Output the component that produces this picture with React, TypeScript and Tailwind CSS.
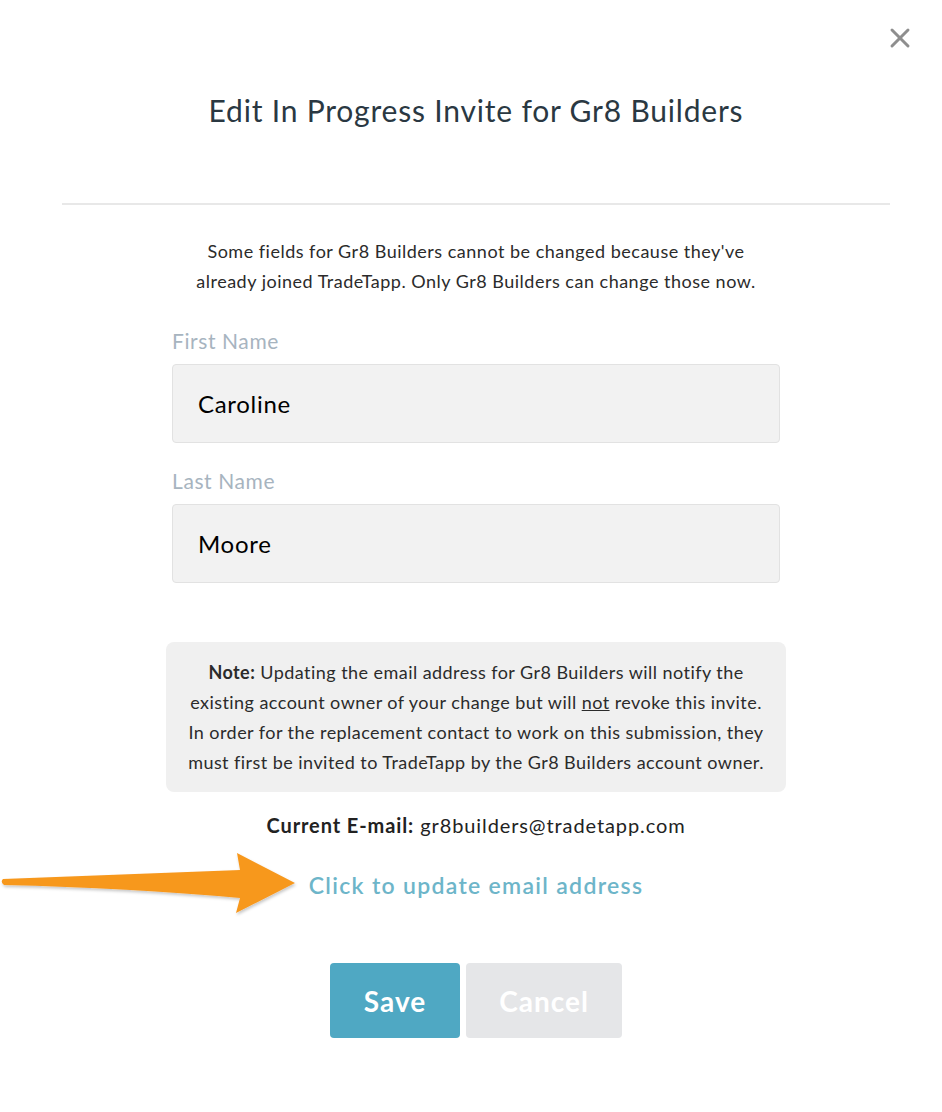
import { X } from 'lucide-react';

function Field({ label, value }: { label: string; value: string }) {
  return (
    <div className="flex flex-col">
      <label className="text-[21px] leading-[28px] tracking-[0.6px] text-[#a7b4bf]">{label}</label>
      <div className="mt-[9px] flex h-[79px] items-center rounded-[4px] border border-[#e2e2e2] bg-[#f2f2f2] px-[25px] text-[24px] tracking-[0.7px] text-black">
        {value}
      </div>
    </div>
  );
}

// orange pointer arrow drawn over the left margin
function Arrow() {
  return (
    <svg
      className="pointer-events-none absolute left-0 top-[840px]"
      width="300"
      height="90"
      viewBox="0 0 300 90"
    >
      <defs>
        <filter id="sh" x="-10%" y="-30%" width="120%" height="160%">
          <feDropShadow dx="1" dy="2" stdDeviation="1.5" floodColor="#000" floodOpacity="0.22" />
        </filter>
      </defs>
      <path
        d="M3 39 L240 30 L237 13 L295 43 L236 73 L240 58 Q130 48 4 45 Q0 42 3 39 Z"
        fill="#f7981f"
        filter="url(#sh)"
      />
    </svg>
  );
}

export default function App() {
  return (
    <div
      className="relative min-h-[1112px] w-full bg-white text-[#2b2b2b]"
      style={{ fontFamily: 'Lato, "Open Sans", sans-serif' }}
    >
      <button className="absolute right-[26px] top-[22px] text-[#8e8e8e]">
        <X size={32} strokeWidth={2.2} />
      </button>

      <div className="pl-[10px]">
        <div className="flex flex-col items-center pt-[90px]">
          <h1 className="text-[30px] leading-[40px] tracking-[0.8px] text-[#2a3842]">
            Edit In Progress Invite for Gr8 Builders
          </h1>
        </div>

        <div className="ml-[52px] mr-[52px] mt-[73px] h-[2px] bg-[#e8e8e8]" />

        <div className="mx-auto flex w-[608px] flex-col">
          <p className="mt-[31px] whitespace-nowrap text-center text-[18px] leading-[30px] tracking-[0.5px] text-[#2b2b2b]">
            Some fields for Gr8 Builders cannot be changed because they've
            <br />
            already joined TradeTapp. Only Gr8 Builders can change those now.
          </p>

          <div className="mt-[31px] flex flex-col gap-[24px]">
            <Field label="First Name" value="Caroline" />
            <Field label="Last Name" value="Moore" />
          </div>
        </div>

        <div className="mx-auto mt-[59px] w-[620px] whitespace-nowrap rounded-[8px] bg-[#f0f0f0] px-[6px] py-[15px] text-center text-[18px] leading-[30px] tracking-[0.45px] text-[#2b2b2b]">
          <span className="font-bold">Note:</span> Updating the email address for Gr8 Builders will notify the
          <br />
          existing account owner of your change but will <span className="underline">not</span> revoke this invite.
          <br />
          In order for the replacement contact to work on this submission, they
          <br />
          must first be invited to TradeTapp by the Gr8 Builders account owner.
        </div>

        <p className="mt-[19px] text-center text-[20px] leading-[28px] tracking-[0.9px] text-[#222]">
          <span className="font-bold">Current E-mail:</span> gr8builders@tradetapp.com
        </p>

        <div className="mt-[30px] flex justify-center">
          <a className="cursor-pointer text-[23px] font-semibold leading-[32px] tracking-[1.3px] text-[#6db5c9]">
            Click to update email address
          </a>
        </div>

        <div className="mt-[62px] flex justify-center gap-[6px]">
          <button className="h-[75px] w-[130px] rounded-[4px] bg-[#4fa8c3] text-[28px] font-bold tracking-[1px] text-white">
            Save
          </button>
          <button className="h-[75px] w-[156px] rounded-[4px] bg-[#e5e6e8] text-[28px] font-bold tracking-[1px] text-white">
            Cancel
          </button>
        </div>
      </div>

      <Arrow />
    </div>
  );
}
